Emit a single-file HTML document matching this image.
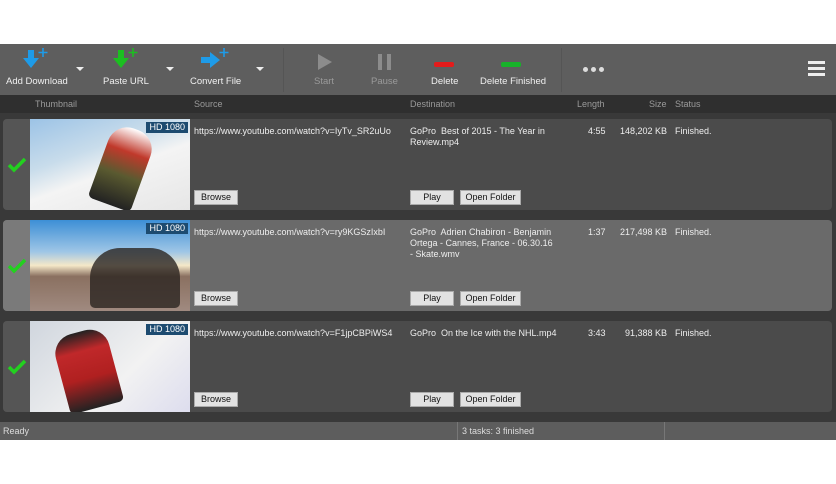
<!DOCTYPE html><html><head><style>
body{margin:0;width:836px;height:484px;background:#fff;position:relative;font-family:"Liberation Sans",sans-serif;overflow:hidden}
.a{position:absolute}
#tb{left:0;top:44px;width:836px;height:51px;background:#5e5e5e}
.lbl{position:absolute;top:32px;font-size:9.5px;color:#f0f0f0;white-space:nowrap}
.dis{color:#9a9a9a}
.dd{position:absolute;top:23px;width:0;height:0;border-left:4px solid transparent;border-right:4px solid transparent;border-top:4px solid #eee}
#hd{left:0;top:95px;width:836px;height:18px;background:#2f2f2f;font-size:9px;color:#9a9a9a}
#hd span{position:absolute;top:4px}
#list{left:0;top:113px;width:836px;height:309px;background:#393939}
.row{position:absolute;left:3px;width:829px;height:91px;background:#4b4b4b;border-radius:4px;overflow:hidden}
.row.sel{background:#6a6a6a}
.chk{position:absolute;left:0;top:0;width:27px;height:91px;background:#555}
.sel .chk{background:#7a7a7a}
.th{position:absolute;left:27px;top:0;width:160px;height:91px}
.hdb{position:absolute;right:2px;top:3px;background:#1d4b70;color:#fff;font-size:9px;padding:0 3px;line-height:11px}
.t{position:absolute;font-size:9px;color:#eee;white-space:nowrap;line-height:11px}
.btn{position:absolute;top:71px;height:13px;background:#e2e2e2;border:1px solid #aaa;font-size:9px;color:#111;text-align:center;line-height:13px}
#sb{left:0;top:422px;width:836px;height:18px;background:#5d5d5d;font-size:9px;color:#ddd}
</style></head><body>
<div id="tb" class="a">
<svg class="a" style="left:22px;top:4px" width="30" height="22"><path d="M6 2h6v8h5l-8 10L1 10h5z" fill="#1e9be8"/><path d="M21 0v9M16.5 4.5h9" stroke="#1e9be8" stroke-width="1.6"/></svg>
<div class="lbl" style="left:6px">Add Download</div><div class="dd" style="left:76px"></div>
<svg class="a" style="left:112px;top:4px" width="30" height="22"><path d="M6 2h6v8h5l-8 10L1 10h5z" fill="#1bbf20"/><path d="M21 0v9M16.5 4.5h9" stroke="#1bbf20" stroke-width="1.6"/></svg>
<div class="lbl" style="left:103px">Paste URL</div><div class="dd" style="left:166px"></div>
<svg class="a" style="left:200px;top:4px" width="32" height="22"><path d="M1 9h9V4l10 8-10 8v-5H1z" fill="#1e9be8"/><path d="M24 0v9M19.5 4.5h9" stroke="#1e9be8" stroke-width="1.6"/></svg>
<div class="lbl" style="left:190px">Convert File</div><div class="dd" style="left:256px"></div>
<div class="a" style="left:283px;top:4px;width:1px;height:44px;background:#555"></div>
<svg class="a" style="left:316px;top:9px" width="18" height="18"><path d="M2 1l14 8-14 8z" fill="#8c8c8c"/></svg>
<div class="lbl dis" style="left:314px">Start</div>
<svg class="a" style="left:376px;top:9px" width="18" height="18"><rect x="2" y="1" width="4" height="16" fill="#8c8c8c"/><rect x="11" y="1" width="4" height="16" fill="#8c8c8c"/></svg>
<div class="lbl dis" style="left:371px">Pause</div>
<div class="a" style="left:434px;top:18px;width:20px;height:5px;background:#e41b1b;border-radius:2px"></div>
<div class="lbl" style="left:431px">Delete</div>
<div class="a" style="left:501px;top:18px;width:20px;height:5px;background:#18b22a;border-radius:2px"></div>
<div class="lbl" style="left:480px">Delete Finished</div>
<div class="a" style="left:561px;top:4px;width:1px;height:44px;background:#555"></div>
<div class="a" style="left:583px;top:23px;font-size:0">
<span style="display:inline-block;width:5px;height:5px;border-radius:3px;background:#ddd;margin-right:3px"></span><span style="display:inline-block;width:5px;height:5px;border-radius:3px;background:#ddd;margin-right:3px"></span><span style="display:inline-block;width:5px;height:5px;border-radius:3px;background:#ddd"></span></div>
<div class="a" style="left:808px;top:17px;width:17px;height:3px;background:#eee;box-shadow:0 6px 0 #eee,0 12px 0 #eee"></div>
</div>
<div id="hd" class="a"><span style="left:35px">Thumbnail</span><span style="left:194px">Source</span><span style="left:410px">Destination</span><span style="left:577px">Length</span><span style="left:649px">Size</span><span style="left:675px">Status</span></div>
<div id="list" class="a">
<div class="row" style="top:6px"><div class="chk"><svg class="a" style="left:4px;top:38px" width="20" height="16"><path d="M2 8l5 5L18 2" stroke="#22d11f" stroke-width="3.5" fill="none"/></svg></div>
<div class="th" style="background:linear-gradient(160deg,#9cc3e6 0%,#c8dceb 35%,#f4f4f4 55%,#e6e6e6 100%)"><div class="a" style="left:70px;top:8px;width:45px;height:80px;background:linear-gradient(#fff 0,#c0392b 30%,#5a5a30 60%,#222 100%);border-radius:20px 20px 5px 5px;transform:rotate(20deg)"></div><div class="hdb">HD 1080</div></div>
<div class="t" style="left:191px;top:7px">https://www.youtube.com/watch?v=IyTv_SR2uUo</div>
<div class="t" style="left:407px;top:7px">GoPro&nbsp; Best of 2015 - The Year in<br>Review.mp4</div>
<div class="t" style="left:585px;top:7px">4:55</div><div class="t" style="left:617px;top:7px">148,202 KB</div><div class="t" style="left:672px;top:7px">Finished.</div>
<div class="btn" style="left:191px;width:42px">Browse</div><div class="btn" style="left:407px;width:42px">Play</div><div class="btn" style="left:457px;width:59px">Open Folder</div></div>
<div class="row sel" style="top:107px"><div class="chk"><svg class="a" style="left:4px;top:38px" width="20" height="16"><path d="M2 8l5 5L18 2" stroke="#22d11f" stroke-width="3.5" fill="none"/></svg></div>
<div class="th" style="background:linear-gradient(#3d8fd6 0%,#9fc6e6 35%,#f5e8c8 50%,#8a7060 62%,#a08a80 100%)"><div class="a" style="left:60px;top:28px;width:90px;height:60px;background:#2a2420;border-radius:30px 30px 5px 5px;opacity:.8"></div><div class="hdb">HD 1080</div></div>
<div class="t" style="left:191px;top:7px">https://www.youtube.com/watch?v=ry9KGSzIxbI</div>
<div class="t" style="left:407px;top:7px">GoPro&nbsp; Adrien Chabiron - Benjamin<br>Ortega - Cannes, France - 06.30.16<br>- Skate.wmv</div>
<div class="t" style="left:585px;top:7px">1:37</div><div class="t" style="left:617px;top:7px">217,498 KB</div><div class="t" style="left:672px;top:7px">Finished.</div>
<div class="btn" style="left:191px;width:42px">Browse</div><div class="btn" style="left:407px;width:42px">Play</div><div class="btn" style="left:457px;width:59px">Open Folder</div></div>
<div class="row" style="top:208px"><div class="chk"><svg class="a" style="left:4px;top:38px" width="20" height="16"><path d="M2 8l5 5L18 2" stroke="#22d11f" stroke-width="3.5" fill="none"/></svg></div>
<div class="th" style="background:linear-gradient(135deg,#d0d6de,#f2f2f2 60%,#dde)"><div class="a" style="left:30px;top:10px;width:55px;height:78px;background:linear-gradient(#222 0,#c0282a 25%,#b02020 60%,#222 100%);border-radius:20px 20px 5px 5px;transform:rotate(-15deg)"></div><div class="hdb">HD 1080</div></div>
<div class="t" style="left:191px;top:7px">https://www.youtube.com/watch?v=F1jpCBPiWS4</div>
<div class="t" style="left:407px;top:7px">GoPro&nbsp; On the Ice with the NHL.mp4</div>
<div class="t" style="left:585px;top:7px">3:43</div><div class="t" style="left:622px;top:7px">91,388 KB</div><div class="t" style="left:672px;top:7px">Finished.</div>
<div class="btn" style="left:191px;width:42px">Browse</div><div class="btn" style="left:407px;width:42px">Play</div><div class="btn" style="left:457px;width:59px">Open Folder</div></div>
</div>
<div id="sb" class="a"><span class="a" style="left:3px;top:4px">Ready</span><div class="a" style="left:457px;top:0;width:1px;height:18px;background:#777"></div><span class="a" style="left:462px;top:4px">3 tasks: 3 finished</span><div class="a" style="left:664px;top:0;width:1px;height:18px;background:#777"></div></div>
</body></html>
